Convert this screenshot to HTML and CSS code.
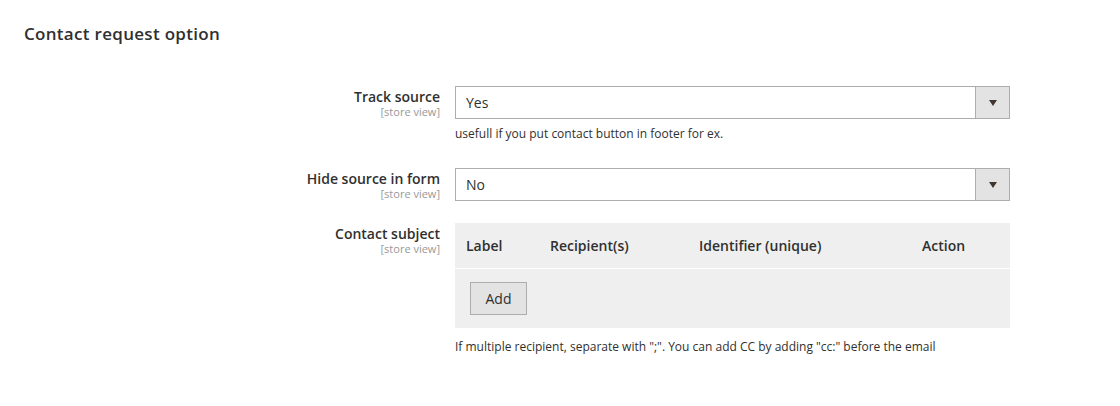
FILE: index.html
```html
<!DOCTYPE html>
<html lang="en">
<head>
<meta charset="utf-8">
<title>Contact request option</title>
<link rel="stylesheet" href="styles.css">
</head>
<body>
<section class="section">
  <h2 class="legend">Contact request option</h2>
  <div class="fields">
    <div class="row row-first">
      <div class="label"><span class="label-text">Track source</span><span class="scope">[store view]</span></div>
      <div class="control">
        <div class="select"><span class="select-value">Yes</span><span class="select-arrow"><span class="tri"></span></span></div>
        <p class="note">usefull if you put contact button in footer for ex.</p>
      </div>
    </div>
    <div class="row">
      <div class="label"><span class="label-text">Hide source in form</span><span class="scope">[store view]</span></div>
      <div class="control">
        <div class="select"><span class="select-value">No</span><span class="select-arrow"><span class="tri"></span></span></div>
      </div>
    </div>
    <div class="row">
      <div class="label"><span class="label-text">Contact subject</span><span class="scope">[store view]</span></div>
      <div class="control">
        <div class="grid">
          <div class="grid-head">
            <span class="col col-label">Label</span>
            <span class="col col-recip">Recipient(s)</span>
            <span class="col col-ident">Identifier (unique)</span>
            <span class="col col-action">Action</span>
          </div>
          <div class="grid-foot">
            <button class="btn" type="button">Add</button>
          </div>
        </div>
        <p class="note">If multiple recipient, separate with ";". You can add CC by adding "cc:" before the email</p>
      </div>
    </div>
  </div>
</section>
</body>
</html>
```
FILE: styles.css
```css
html, body {
  margin: 0;
  padding: 0;
  background: #fff;
}
body {
  font-family: "Open Sans", "Liberation Sans", sans-serif;
  color: #303030;
}
.section {
  padding: 21px 24px 0 24px;
}
.legend {
  margin: 0;
  font-size: 17px;
  font-weight: 600;
  line-height: 26px;
  color: #303030;
  letter-spacing: 0.3px;
}
.fields {
  margin-top: 39px;
  display: flex;
  flex-direction: column;
}
.row {
  display: grid;
  grid-template-columns: 416px 555px;
  column-gap: 15px;
  margin-bottom: 22px;
}
.row-first {
  margin-bottom: 25px;
}
.label {
  display: flex;
  flex-direction: column;
  align-items: flex-end;
  padding-top: 1px;
}
.label-text {
  font-size: 14px;
  font-weight: 600;
  line-height: 19px;
  color: #303030;
}
.scope {
  font-size: 11px;
  line-height: 12px;
  color: #999;
}
.control {
  display: flex;
  flex-direction: column;
}
.select {
  height: 33px;
  box-sizing: border-box;
  border: 1px solid #adadad;
  display: flex;
  align-items: stretch;
  background: #fff;
}
.select-value {
  flex: 1;
  font-size: 14px;
  line-height: 31px;
  padding-left: 10px;
  color: #303030;
}
.select-arrow {
  width: 33px;
  background: #e3e3e3;
  border-left: 1px solid #adadad;
  display: flex;
  align-items: center;
  justify-content: center;
}
.tri {
  width: 0;
  height: 0;
  border-left: 4px solid transparent;
  border-right: 4px solid transparent;
  border-top: 6px solid #41362f;
}
.note {
  margin: 6px 0 0 0;
  font-size: 12px;
  line-height: 18px;
  color: #303030;
}
.grid {
  background: #efefef;
}
.grid-head {
  height: 45px;
  display: flex;
  align-items: center;
  border-bottom: 1px solid #fff;
  font-size: 14px;
  font-weight: 600;
  color: #303030;
}
.col-label { margin-left: 11px; width: 84px; }
.col-recip { width: 149px; }
.col-ident { width: 223px; }
.grid-foot {
  height: 59px;
  padding: 13px 0 0 15px;
  box-sizing: border-box;
}
.btn {
  font-family: "Open Sans", "Liberation Sans", sans-serif;
  font-size: 14px;
  font-weight: 400;
  color: #303030;
  background: #e3e3e3;
  border: 1px solid #adadad;
  height: 33px;
  width: 57px;
  padding: 0;
}
.grid + .note {
  margin-top: 10px;
}
```
